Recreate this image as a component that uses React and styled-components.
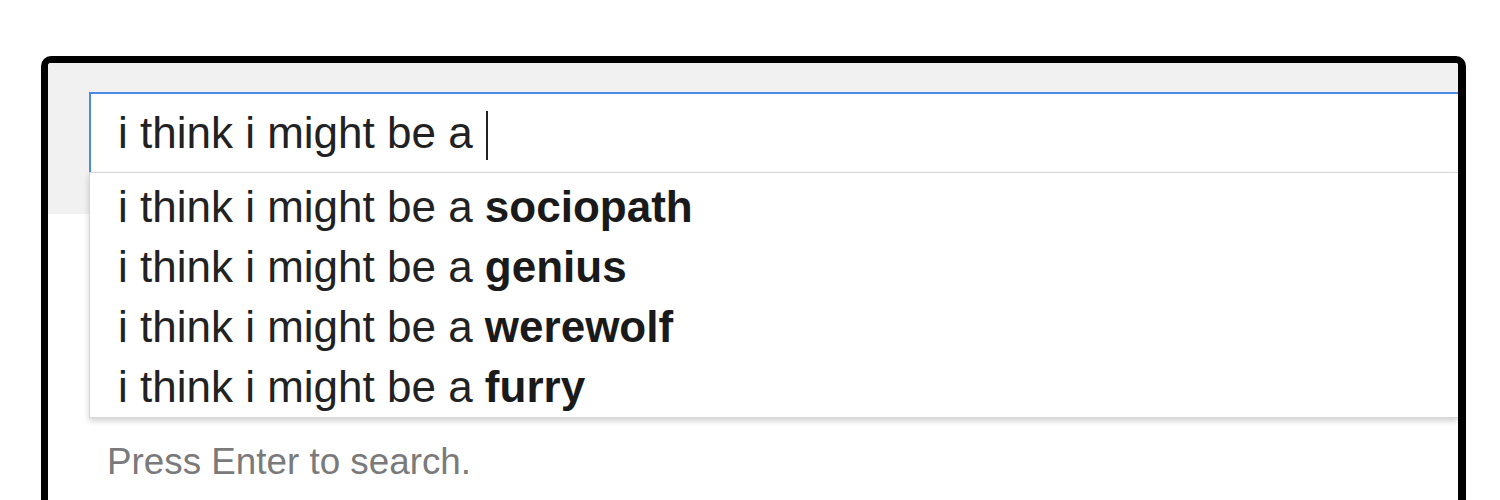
import React from "react";
import styled, { createGlobalStyle } from "styled-components";

const Global = createGlobalStyle`
  html, body { margin: 0; padding: 0; background: #fff; overflow: hidden; }
  body { font-family: "Liberation Sans", Arial, sans-serif; }
`;

const Page = styled.div`
  width: 1500px;
  height: 500px;
  padding: 56px 0 0 41px;
  box-sizing: border-box;
`;

const Frame = styled.div`
  width: 1425px;
  height: 444px;
  box-sizing: border-box;
  border: 7px solid #000;
  border-right-width: 8px;
  border-bottom: none;
  border-radius: 10px 10px 0 0;
  background: #fff;
  overflow: hidden;
`;

const Header = styled.div`
  position: relative;
  background: #f1f1f1;
  height: 151px;
  box-sizing: border-box;
  padding: 29px 0 0 41px;
`;

const SearchBox = styled.div`
  height: 80px;
  box-sizing: border-box;
  background: #fff;
  border-top: 2px solid #4d8ae8;
  border-left: 2px solid #4d8ae8;
  padding-left: 27px;
  font-size: 44px;
  line-height: 78px;
  color: #222;
  white-space: pre;
  display: flex;
  align-items: center;
`;

const Caret = styled.span`
  display: inline-block;
  width: 2px;
  height: 49px;
  background: #222;
  margin-left: 1px;
  margin-top: 4px;
`;

const Dropdown = styled.ul`
  position: absolute;
  top: 109px;
  left: 41px;
  right: 0;
  margin: 0;
  padding: 4px 0 0 0;
  list-style: none;
  background: #fff;
  border: 1px solid #d6d6d6;
  border-right: none;
  box-shadow: 0 3px 6px rgba(0, 0, 0, 0.18);
  z-index: 2;
`;

const Suggestion = styled.li`
  height: 60px;
  line-height: 60px;
  padding-left: 28px;
  font-size: 44px;
  color: #222;
  white-space: pre;
`;

const Completion = styled.b`
  font-weight: 700;
  color: #1a1a1a;
`;

const Hint = styled.div`
  margin: 227px 0 0 59px;
  font-size: 36.8px;
  line-height: 42px;
  color: #7a7a7a;
`;

const prefix = "i think i might be a ";
const suggestions = ["sociopath", "genius", "werewolf", "furry"];

export default function App() {
  return (
    <>
      <Global />
      <Page>
        <Frame>
          <Header>
            <SearchBox>
              {prefix}
              <Caret />
            </SearchBox>
            <Dropdown>
              {suggestions.map((s) => (
                <Suggestion key={s}>
                  {prefix}
                  <Completion>{s}</Completion>
                </Suggestion>
              ))}
            </Dropdown>
          </Header>
          <Hint>Press Enter to search.</Hint>
        </Frame>
      </Page>
    </>
  );
}
